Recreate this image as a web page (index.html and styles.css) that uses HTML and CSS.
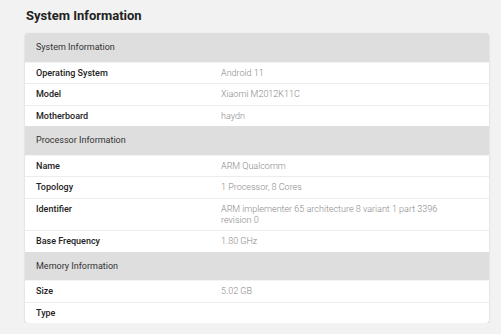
FILE: index.html
```html
<!DOCTYPE html>
<html lang="en">
<head>
  <meta charset="UTF-8">
  <title>System Information</title>
  <link rel="stylesheet" href="styles.css">
</head>
<body>
  <div class="page">
    <h2 class="page-title">System Information</h2>

    <div class="info-card">
      <div class="section-head">System Information</div>
      <div class="info-row"><div class="label">Operating System</div><div class="value">Android 11</div></div>
      <div class="info-row"><div class="label">Model</div><div class="value">Xiaomi M2012K11C</div></div>
      <div class="info-row"><div class="label">Motherboard</div><div class="value">haydn</div></div>

      <div class="section-head">Processor Information</div>
      <div class="info-row"><div class="label">Name</div><div class="value">ARM Qualcomm</div></div>
      <div class="info-row"><div class="label">Topology</div><div class="value">1 Processor, 8 Cores</div></div>
      <div class="info-row"><div class="label">Identifier</div><div class="value">ARM implementer 65 architecture 8 variant 1 part 3396 revision 0</div></div>
      <div class="info-row"><div class="label">Base Frequency</div><div class="value">1.80 GHz</div></div>

      <div class="section-head">Memory Information</div>
      <div class="info-row"><div class="label">Size</div><div class="value">5.02 GB</div></div>
      <div class="info-row"><div class="label">Type</div><div class="value"></div></div>
    </div>
  </div>
</body>
</html>
```

FILE: styles.css
```css
* {
  box-sizing: border-box;
}

body {
  margin: 0;
  background: #f2f2f2;
  font-family: Roboto, "Liberation Sans", sans-serif;
  color: #222;
}

.page {
  padding: 7px 12px 0 25px;
}

.page-title {
  margin: 0 0 8px 1px;
  font-size: 13px;
  font-weight: 700;
  color: #222;
  line-height: 18px;
}

.info-card {
  background: #fff;
  border-radius: 3px;
  box-shadow: 0 1px 2px rgba(0,0,0,0.18);
  overflow: hidden;
}

.section-head {
  background: #dedede;
  height: 28.5px;
  padding: 0 11px;
  display: flex;
  align-items: center;
  font-size: 9px;
  color: #333;
}

.info-row {
  display: grid;
  grid-template-columns: 185px 1fr;
  padding: 5px 11px 4.5px;
  font-size: 9px;
  line-height: 11px;
  border-top: 1px solid #ececec;
}

.section-head + .info-row {
  border-top-color: #f4f4f4;
}

.info-row .value:empty::after {
  content: "\00a0";
}

.label {
  font-weight: 500;
  color: #222;
}

.value {
  color: #888;
  font-weight: 300;
  padding-right: 40px;
}
```
